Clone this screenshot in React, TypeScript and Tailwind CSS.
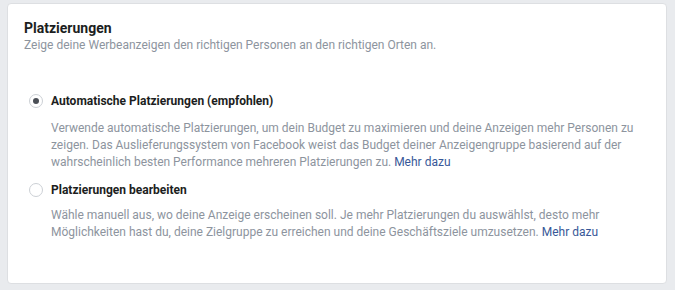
const Radio = ({ checked }: { checked?: boolean }) => (
  <span className="mt-[1px] flex h-[14px] w-[14px] shrink-0 items-center justify-center rounded-full border border-[#ccd0d5] bg-white">
    {checked && <span className="h-[6px] w-[6px] rounded-full bg-[#4b4f56]"></span>}
  </span>
);

const App = () => {
  return (
    <div
      className="h-[290px] w-[675px] bg-[#e9ebee] pl-[7px] pr-[8px] pt-[3px]"
      style={{ fontFamily: "Roboto, 'Liberation Sans', sans-serif" }}
    >
      <div className="h-[281px] rounded-[4px] border border-[#dddfe2] bg-white px-4 pt-[15px]">
        {/* Header */}
        <h2 className="text-[14px] font-bold leading-[18px] text-[#1c1e21]">Platzierungen</h2>
        <p className="text-[12px] leading-[16px] text-[#8d949e]">
          Zeige deine Werbeanzeigen den richtigen Personen an den richtigen Orten an.
        </p>

        {/* Options */}
        <div className="mt-10 flex flex-col">
          <div className="flex gap-[8px] pl-[5px]">
            <Radio checked />
            <div>
              <div className="text-[12px] font-bold leading-[16px] text-[#1c1e21]">
                Automatische Platzierungen (empfohlen)
              </div>
              <p className="mt-[11px] text-[12px] leading-[17px] text-[#8d949e]">
                Verwende automatische Platzierungen, um dein Budget zu maximieren und deine Anzeigen mehr Personen zu
                zeigen. Das Auslieferungssystem von Facebook weist das Budget deiner Anzeigengruppe basierend auf der
                wahrscheinlich besten Performance mehreren Platzierungen zu.{" "}
                <span className="text-[#385898]">Mehr dazu</span>
              </p>
            </div>
          </div>

          <div className="mt-[11px] flex gap-[8px] pl-[5px]">
            <Radio />
            <div>
              <div className="text-[12px] font-bold leading-[16px] text-[#1c1e21]">Platzierungen bearbeiten</div>
              <p className="mt-[9px] text-[12px] leading-[17px] text-[#8d949e]">
                Wähle manuell aus, wo deine Anzeige erscheinen soll. Je mehr Platzierungen du auswählst, desto mehr
                Möglichkeiten hast du, deine Zielgruppe zu erreichen und deine Geschäftsziele umzusetzen.{" "}
                <span className="text-[#385898]">Mehr dazu</span>
              </p>
            </div>
          </div>
        </div>
      </div>
    </div>
  );
};

export default App;
